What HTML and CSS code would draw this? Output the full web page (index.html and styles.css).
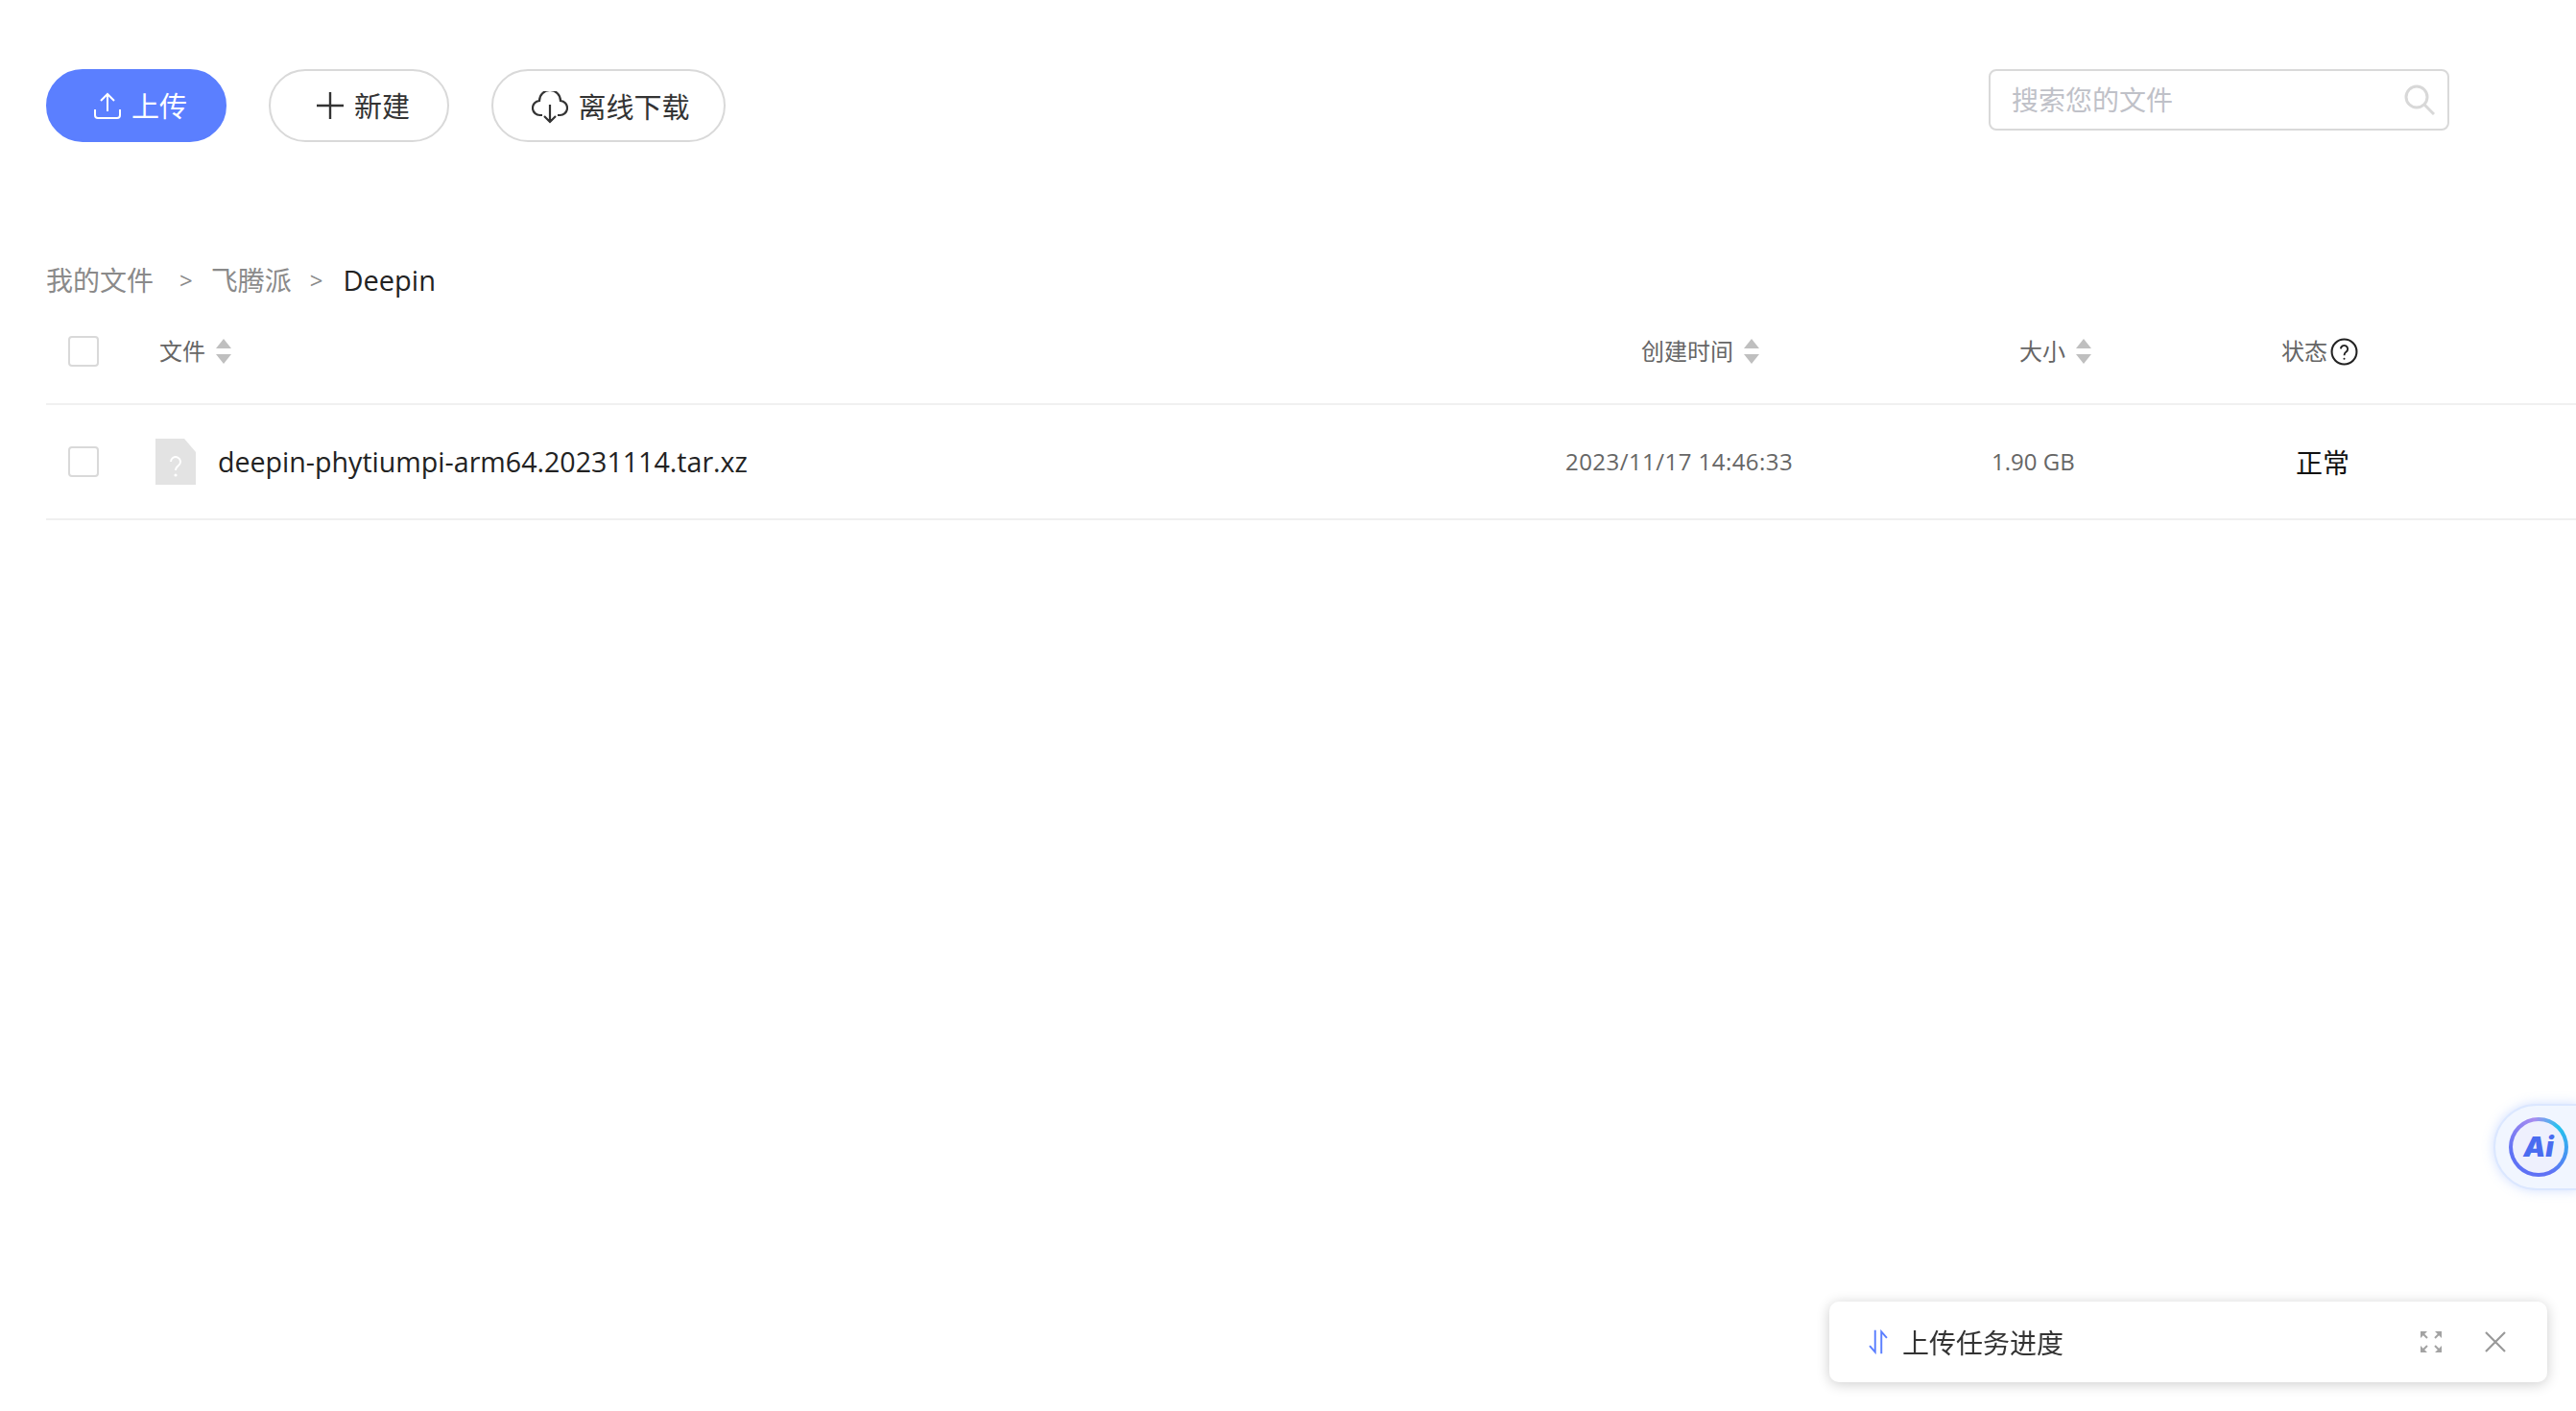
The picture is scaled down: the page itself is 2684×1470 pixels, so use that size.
FILE: index.html
```html
<!DOCTYPE html>
<html lang="zh-CN">
<head>
    <meta charset="UTF-8">
    <title>我的文件</title>
    <link rel="stylesheet" href="styles.css">
</head>
<body>
    <!-- Toolbar -->
    <div class="toolbar">
        <div class="actions">
            <button class="btn btn-primary">
                <svg class="btn-icon" viewBox="0 0 30 30" fill="none" stroke="#fff" stroke-width="2"><path d="M15 21V3M8 10l7-7 7 7M2 19v6q0 3 3 3h20q3 0 3-3v-6"/></svg>
                <span>上传</span>
            </button>
            <button class="btn">
                <svg class="btn-icon" viewBox="0 0 30 30" fill="none" stroke="#333" stroke-width="2.4"><path d="M15 1v28M1 15h28"/></svg>
                <span>新建</span>
            </button>
            <button class="btn btn-low">
                <svg class="btn-icon btn-icon-wide" viewBox="0 0 38 34" fill="none" stroke="#333" stroke-width="2.2"><path d="M11 25H9a7.500 7.500 0 0 1-1-15 11 11 0 0 1 22 0 7.500 7.500 0 0 1-1 15h-2M19 14v18M13 26l6 6 6-6"/></svg>
                <span>离线下载</span>
            </button>
        </div>
        <div class="search">
            <input type="text" placeholder="搜索您的文件">
            <svg class="search-icon" viewBox="0 0 32 32" fill="none" stroke="#d8d8d8" stroke-width="3"><circle cx="13" cy="13" r="11"/><path d="M21 21l10 10"/></svg>
        </div>
    </div>

    <!-- Breadcrumb -->
    <div class="crumbs">
        <a>我的文件</a>
        <i>&gt;</i>
        <a>飞腾派</a>
        <i>&gt;</i>
        <b>Deepin</b>
    </div>

    <!-- File list -->
    <div class="row row-head">
        <div><span class="check"></span></div>
        <div class="cell cell-file">文件 <span class="sort"></span></div>
        <div class="cell cell-time">创建时间 <span class="sort"></span></div>
        <div class="cell cell-size">大小 <span class="sort"></span></div>
        <div class="cell">状态<svg class="help" viewBox="0 0 28 28" fill="none" stroke="#222" stroke-width="2"><circle cx="14" cy="14" r="12.500"/><path d="M10.500 11a3.500 3.500 0 1 1 5.500 3c-1.500 1-2 1.500-2 3.500" stroke-width="1.800"/><circle cx="14" cy="21" r="1" fill="#222" stroke="none"/></svg></div>
    </div>
    <div class="row row-file">
        <div><span class="check"></span></div>
        <div class="name">
            <svg class="file-icon" viewBox="0 0 42 48"><path d="M0 0h30l12 14v34H0z" fill="#e3e3e3"/><path d="M16 24a5 5 0 1 1 8 4c-2 1.500-3 2.500-3 5" fill="none" stroke="#fff" stroke-width="2"/><circle cx="21" cy="38" r="1.600" fill="#fff"/></svg>
            <span class="name-text">deepin-phytiumpi-arm64.20231114.tar.xz</span>
        </div>
        <div class="time">2023/11/17 14:46:33</div>
        <div class="size">1.90 GB</div>
        <div class="status">正常</div>
    </div>

    <!-- AI helper -->
    <div class="ai-tab">
        <div class="ai-ring"><div class="ai-face">Ai</div></div>
    </div>

    <!-- Upload progress -->
    <div class="task">
        <svg class="task-icon" viewBox="0 0 24 32" fill="none" stroke="#5b7fff" stroke-width="2.400"><path d="M8 1v28L1 21M16 31V3l7 8"/></svg>
        <span class="task-title">上传任务进度</span>
        <svg class="task-btn" viewBox="0 0 22 22" fill="#a3a3a3"><path d="M0 0h7L0 7zM22 0v7l-7-7zM0 22v-7l7 7zM22 22h-7l7-7z"/><path d="M3 3l4 4M19 3l-4 4M3 19l4-4M19 19l-4-4" stroke="#a3a3a3" stroke-width="2"/></svg>
        <svg class="task-btn task-close" viewBox="0 0 22 22" fill="none" stroke="#999" stroke-width="2.200"><path d="M1 1l20 20M21 1L1 21"/></svg>
    </div>
</body>
</html>
```

FILE: styles.css
```css
/* General Styles */
html, body {
    height: 100%;
}

body {
    margin: 0;
    overflow: hidden;
    background: #fff;
    color: #222;
    font-family: 'Open Sans', 'Noto Sans CJK SC', sans-serif;
    font-size: 28px;
}

/* Toolbar */
.toolbar {
    display: flex;
    justify-content: space-between;
    align-items: flex-start;
    height: 76px;
    padding: 72px 132px 0 48px;
}

.actions {
    display: flex;
    gap: 44px;
}

.btn {
    display: flex;
    align-items: center;
    justify-content: center;
    gap: 10px;
    width: 188px;
    height: 76px;
    padding: 0 0 0 8px;
    border: 2px solid #d9d9d9;
    border-radius: 38px;
    background: #fff;
    color: #333;
    font-family: inherit;
    font-size: 29px;
    line-height: 1;
}

.btn-primary {
    border-color: #5b7fff;
    background: #5b7fff;
    color: #fff;
}

.btn-low {
    width: 244px;
    padding: 3px 0 0 5px;
}

.btn-icon {
    width: 30px;
    height: 30px;
}

.btn-icon-wide {
    width: 38px;
    height: 34px;
}

.search {
    position: relative;
    width: 480px;
    height: 64px;
}

.search input {
    box-sizing: border-box;
    width: 100%;
    height: 100%;
    padding: 0 60px 0 22px;
    border: 2px solid #d9d9d9;
    border-radius: 8px;
    outline: none;
    font-family: inherit;
    font-size: 28px;
}

.search input::placeholder {
    color: #bfc1c8;
}

.search-icon {
    position: absolute;
    top: 16px;
    right: 15px;
    width: 32px;
    height: 32px;
}

/* Breadcrumb */
.crumbs {
    display: flex;
    align-items: center;
    height: 40px;
    margin: 123px 0 0 48px;
    color: #8a8a8a;
}

.crumbs a:first-child {
    margin-right: 8px;
}

.crumbs i {
    margin: 0 19px;
    font-style: normal;
    font-size: 24px;
}

.crumbs b {
    margin-left: 2px;
    font-weight: 400;
    font-size: 29px;
    color: #222;
}

/* File list */
.row {
    display: grid;
    grid-template-columns: 114px 1469px 444px 302px 1fr;
    align-items: center;
    margin-left: 48px;
    border-bottom: 2px solid #f0f0f0;
}

.row-head {
    height: 40px;
    margin-top: 35px;
    padding-bottom: 34px;
    color: #666;
    font-size: 24px;
}

.row-file {
    height: 118px;
}

.check {
    display: block;
    box-sizing: border-box;
    width: 32px;
    height: 32px;
    margin-left: 23px;
    border: 2px solid #d9d9d9;
    border-radius: 4px;
    background: #fff;
}

.cell {
    display: flex;
    align-items: center;
    line-height: 36px;
    height: 40px;
}

.cell-file {
    padding-left: 4px;
}

.cell-time {
    padding-left: 79px;
}

.cell-size {
    padding-left: 29px;
}

.sort {
    display: flex;
    flex-direction: column;
    gap: 6px;
    margin-left: 11px;
}

.sort::before, .sort::after {
    content: "";
    width: 0;
    height: 0;
    border-left: 8px solid transparent;
    border-right: 8px solid transparent;
}

.sort::before {
    border-bottom: 10px solid #bfbfbf;
}

.sort::after {
    border-top: 10px solid #bfbfbf;
}

.help {
    width: 29px;
    height: 29px;
    margin-left: 3px;
}

.name {
    display: flex;
    align-items: center;
    gap: 22px;
    font-size: 28.600px;
}

.name-text {
    margin: 0 0 2px 1px;
}

.file-icon {
    width: 42px;
    height: 48px;
}

.time, .size {
    margin-bottom: 2px;
    color: #666;
    font-size: 24px;
}

.time {
    letter-spacing: 0.450px;
}

.status {
    padding-left: 15px;
    color: #111;
}

/* AI helper */
.ai-tab {
    position: fixed;
    right: -2px;
    top: 1150px;
    display: flex;
    align-items: center;
    box-sizing: border-box;
    width: 88px;
    height: 90px;
    padding-left: 14px;
    border: 2px solid #dbe7ff;
    border-radius: 45px 0 0 45px;
    background: #f1f6ff;
    box-shadow: 0 0 12px rgba(120, 160, 255, 0.35);
}

.ai-ring {
    box-sizing: border-box;
    width: 62px;
    height: 62px;
    padding: 4px;
    border-radius: 50%;
    background: conic-gradient(from 45deg, #24c4ee, #5f72f5 30%, #5f72f5 60%, #a88cf0 85%, #24c4ee);
}

.ai-face {
    height: 100%;
    border-radius: 50%;
    background: #eef0fd;
    color: #4a6cf0;
    font-family: Inter, sans-serif;
    font-size: 29px;
    font-style: italic;
    font-weight: 900;
    line-height: 54px;
    text-align: center;
}

/* Upload progress */
.task {
    position: fixed;
    left: 1906px;
    top: 1356px;
    display: flex;
    align-items: center;
    box-sizing: border-box;
    width: 748px;
    height: 84px;
    padding: 0 43px 0 39px;
    border-radius: 10px;
    background: #fff;
    box-shadow: 0 2px 14px rgba(0, 0, 0, 0.2);
    color: #333;
}

.task-icon {
    width: 24px;
    height: 26px;
}

.task-title {
    flex: 1;
    margin-left: 13px;
}

.task-btn {
    width: 22px;
    height: 22px;
}

.task-close {
    margin-left: 45px;
}
```
